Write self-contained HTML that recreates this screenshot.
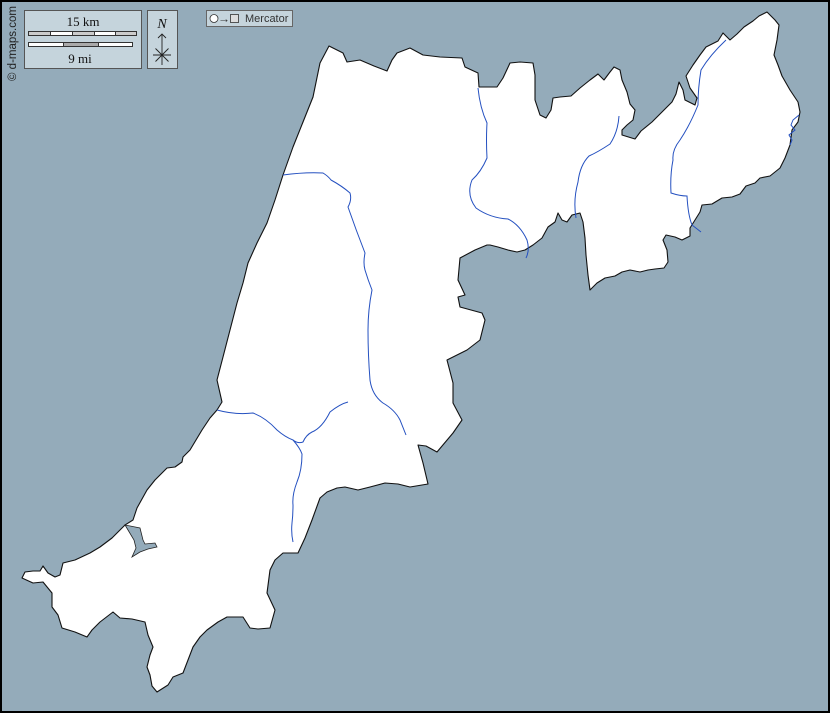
<!DOCTYPE html>
<html><head><meta charset="utf-8"><style>
html,body{margin:0;padding:0;width:830px;height:713px;overflow:hidden;background:#94abba}
svg{display:block}
</style></head><body>
<svg width="830" height="713" viewBox="0 0 830 713" xmlns="http://www.w3.org/2000/svg">
<rect x="0" y="0" width="830" height="713" fill="#94abba"/>
<path fill="#fff" stroke="#111" stroke-width="1.1" stroke-linejoin="round" d="
M329,46 L343,53 L347,62 L360,60 L374,66 L387,71 L392,60 L397,53 L410,48 L423,55 L440,57 L462,58 L465,67 L478,73 L479,87 L497,87
L503,78 L510,63 L520,62 L533,63 L535,75 L535,100 L540,115 L546,118 L551,110 L553,98 L560,97 L571,96 L580,88 L590,80 L598,74 L604,80 L610,72 L614,67 L620,70 L622,80 L627,92 L630,104 L635,110 L633,120 L627,125 L622,130 L622,135 L635,139 L641,131 L652,122 L662,112 L672,102 L676,94 L679,82 L683,90 L685,100 L695,105 L697,98 L690,88 L686,76 L693,65 L700,55 L706,47 L718,41 L723,33 L730,40 L737,34 L744,27 L753,21 L759,16 L767,12 L775,20 L779,25 L777,40 L774,55 L778,65 L782,76 L790,90 L798,102 L800,112 L798,122 L792,130 L790,145 L785,158 L780,168 L770,176 L760,178 L755,183 L746,186 L740,194 L732,197 L722,198 L712,204 L702,205 L700,212 L695,220 L690,228 L690,236 L682,240 L675,237 L666,235 L663,240 L667,250 L668,262 L664,268 L655,269 L648,270 L640,272 L630,270 L622,272 L615,276 L605,278 L597,283 L590,290 L588,275 L586,255 L585,238 L583,222 L580,213 L572,215 L567,222 L562,220 L558,213 L555,222 L548,227 L542,238 L533,245 L525,250 L517,252 L508,250 L498,247 L490,245 L487,245
L475,250 L460,258 L458,280 L465,295 L458,297 L460,307 L482,313 L485,320 L480,340 L467,350 L447,360 L453,383 L453,403 L462,420 L453,433 L437,452 L426,446 L418,445 L423,463 L428,484 L410,487 L398,484 L385,483 L370,487 L358,490 L345,487 L337,488 L327,492 L320,498 L312,520 L305,538 L298,553 L283,553 L275,560 L270,570 L267,593 L275,610 L270,628 L258,629 L250,628 L243,617 L227,617 L218,622 L207,630 L200,637 L193,647 L188,660 L183,673 L173,677 L168,685 L157,692 L152,686 L150,675 L147,667 L150,655 L153,647 L148,635 L145,622 L132,619 L120,618 L113,612 L100,622 L92,630 L87,637 L75,632 L62,628 L58,615 L52,607 L52,593 L43,582 L33,583 L22,578 L25,572 L33,571 L40,571 L43,566 L48,573 L55,577 L60,575 L63,563 L75,560 L90,553 L100,547 L112,538 L125,525 L133,520 L137,508 L147,490 L155,480 L167,468 L175,467 L182,462 L183,457 L190,450 L202,430 L210,418 L217,410 L222,402 L217,380 L223,357 L230,330 L237,303 L243,283 L248,263 L257,243 L267,223 L275,200 L283,175 L293,147 L303,122 L313,97 L320,63 Z"/>
<path fill="#94abba" stroke="#222" stroke-width="0.8" d="M125,525 L140,528 L143,540 L145,544 L155,543 L157,547 L148,549 L140,552 L132,557 L136,548 L134,540 L128,530 Z"/>
<g fill="none" stroke="#2450c0" stroke-width="1">
<path d="M217,410 Q235,415 253,413 Q266,418 277,430 Q285,437 293,440 Q298,444 303,442 Q306,435 312,432 Q322,428 330,412 Q340,404 348,402"/>
<path d="M293,440 Q300,448 302,454 Q302,470 297,482 Q292,495 293,505 Q293,515 292,523 Q291,533 293,542"/>
<path d="M283,175 Q305,172 323,173 Q328,176 331,180 Q342,186 350,193 Q352,200 348,207 Q356,230 365,253 Q363,263 365,270 Q368,280 372,290 Q368,310 368,330 Q368,355 370,380 Q372,395 383,403 Q395,410 400,420 L406,435"/>
<path d="M478,88 Q480,108 487,123 Q486,140 487,158 Q481,172 472,180 Q466,195 476,208 Q490,218 508,219 Q520,225 527,240 Q530,250 526,258"/>
<path d="M619,116 Q618,132 610,144 Q598,152 589,156 Q580,165 578,182 Q573,200 576,218"/>
<path d="M726,40 Q710,55 701,70 Q698,88 698,105 Q690,125 680,140 Q672,150 673,160 Q670,175 671,193 Q680,196 687,196 Q688,215 692,225 L701,232"/>
<path d="M799,115 L793,120 L791,125 L795,130 L789,135 L792,140 L790,145"/>
</g>
<g font-family="'Liberation Serif',serif" font-size="13" fill="#111">
<rect x="24.5" y="10.5" width="117" height="58" fill="#c5d4dc" stroke="#555"/>
<text x="83" y="26" text-anchor="middle">15 km</text>
<rect x="28.5" y="31.5" width="108" height="4" fill="#fff" stroke="#333"/>
<rect x="28.5" y="31.5" width="22" height="4" fill="#ccc" stroke="#333"/>
<rect x="72.5" y="31.5" width="22" height="4" fill="#ccc" stroke="#333"/>
<rect x="115.5" y="31.5" width="21" height="4" fill="#ccc" stroke="#333"/>
<rect x="28.5" y="42.5" width="104" height="4" fill="#fff" stroke="#333"/>
<rect x="63.5" y="42.5" width="35" height="4" fill="#aaa" stroke="#333"/>
<text x="80" y="63" text-anchor="middle">9 mi</text>
<rect x="147.5" y="10.5" width="30" height="58" fill="#c5d4dc" stroke="#555"/>
<text x="162" y="28" text-anchor="middle" font-style="italic" font-size="14">N</text>
<path d="M162,34 V65 M158,38 L162,34 L166,38 M153,55 H171 M155.5,48.5 L168.5,61.5 M168.5,48.5 L155.5,61.5" stroke="#222" stroke-width="0.9" fill="none"/>
</g>
<g font-family="'Liberation Sans',sans-serif" font-size="11" fill="#333">
<rect x="206.5" y="10.5" width="86" height="16" fill="#c5d4dc" stroke="#666"/>
<circle cx="214" cy="18.5" r="4" fill="#fff" stroke="#333" stroke-width="0.8"/>
<text x="218" y="22.5" font-size="12">→</text>
<rect x="230.5" y="14.5" width="8" height="8" fill="#ddd" stroke="#333" stroke-width="0.8"/>
<text x="245" y="22">Mercator</text>
<text transform="translate(16,81) rotate(-90)" font-size="11.5" fill="#222">© d-maps.com</text>
</g>
<rect x="1" y="1" width="828" height="711" fill="none" stroke="#000" stroke-width="2"/>
</svg>
</body></html>
